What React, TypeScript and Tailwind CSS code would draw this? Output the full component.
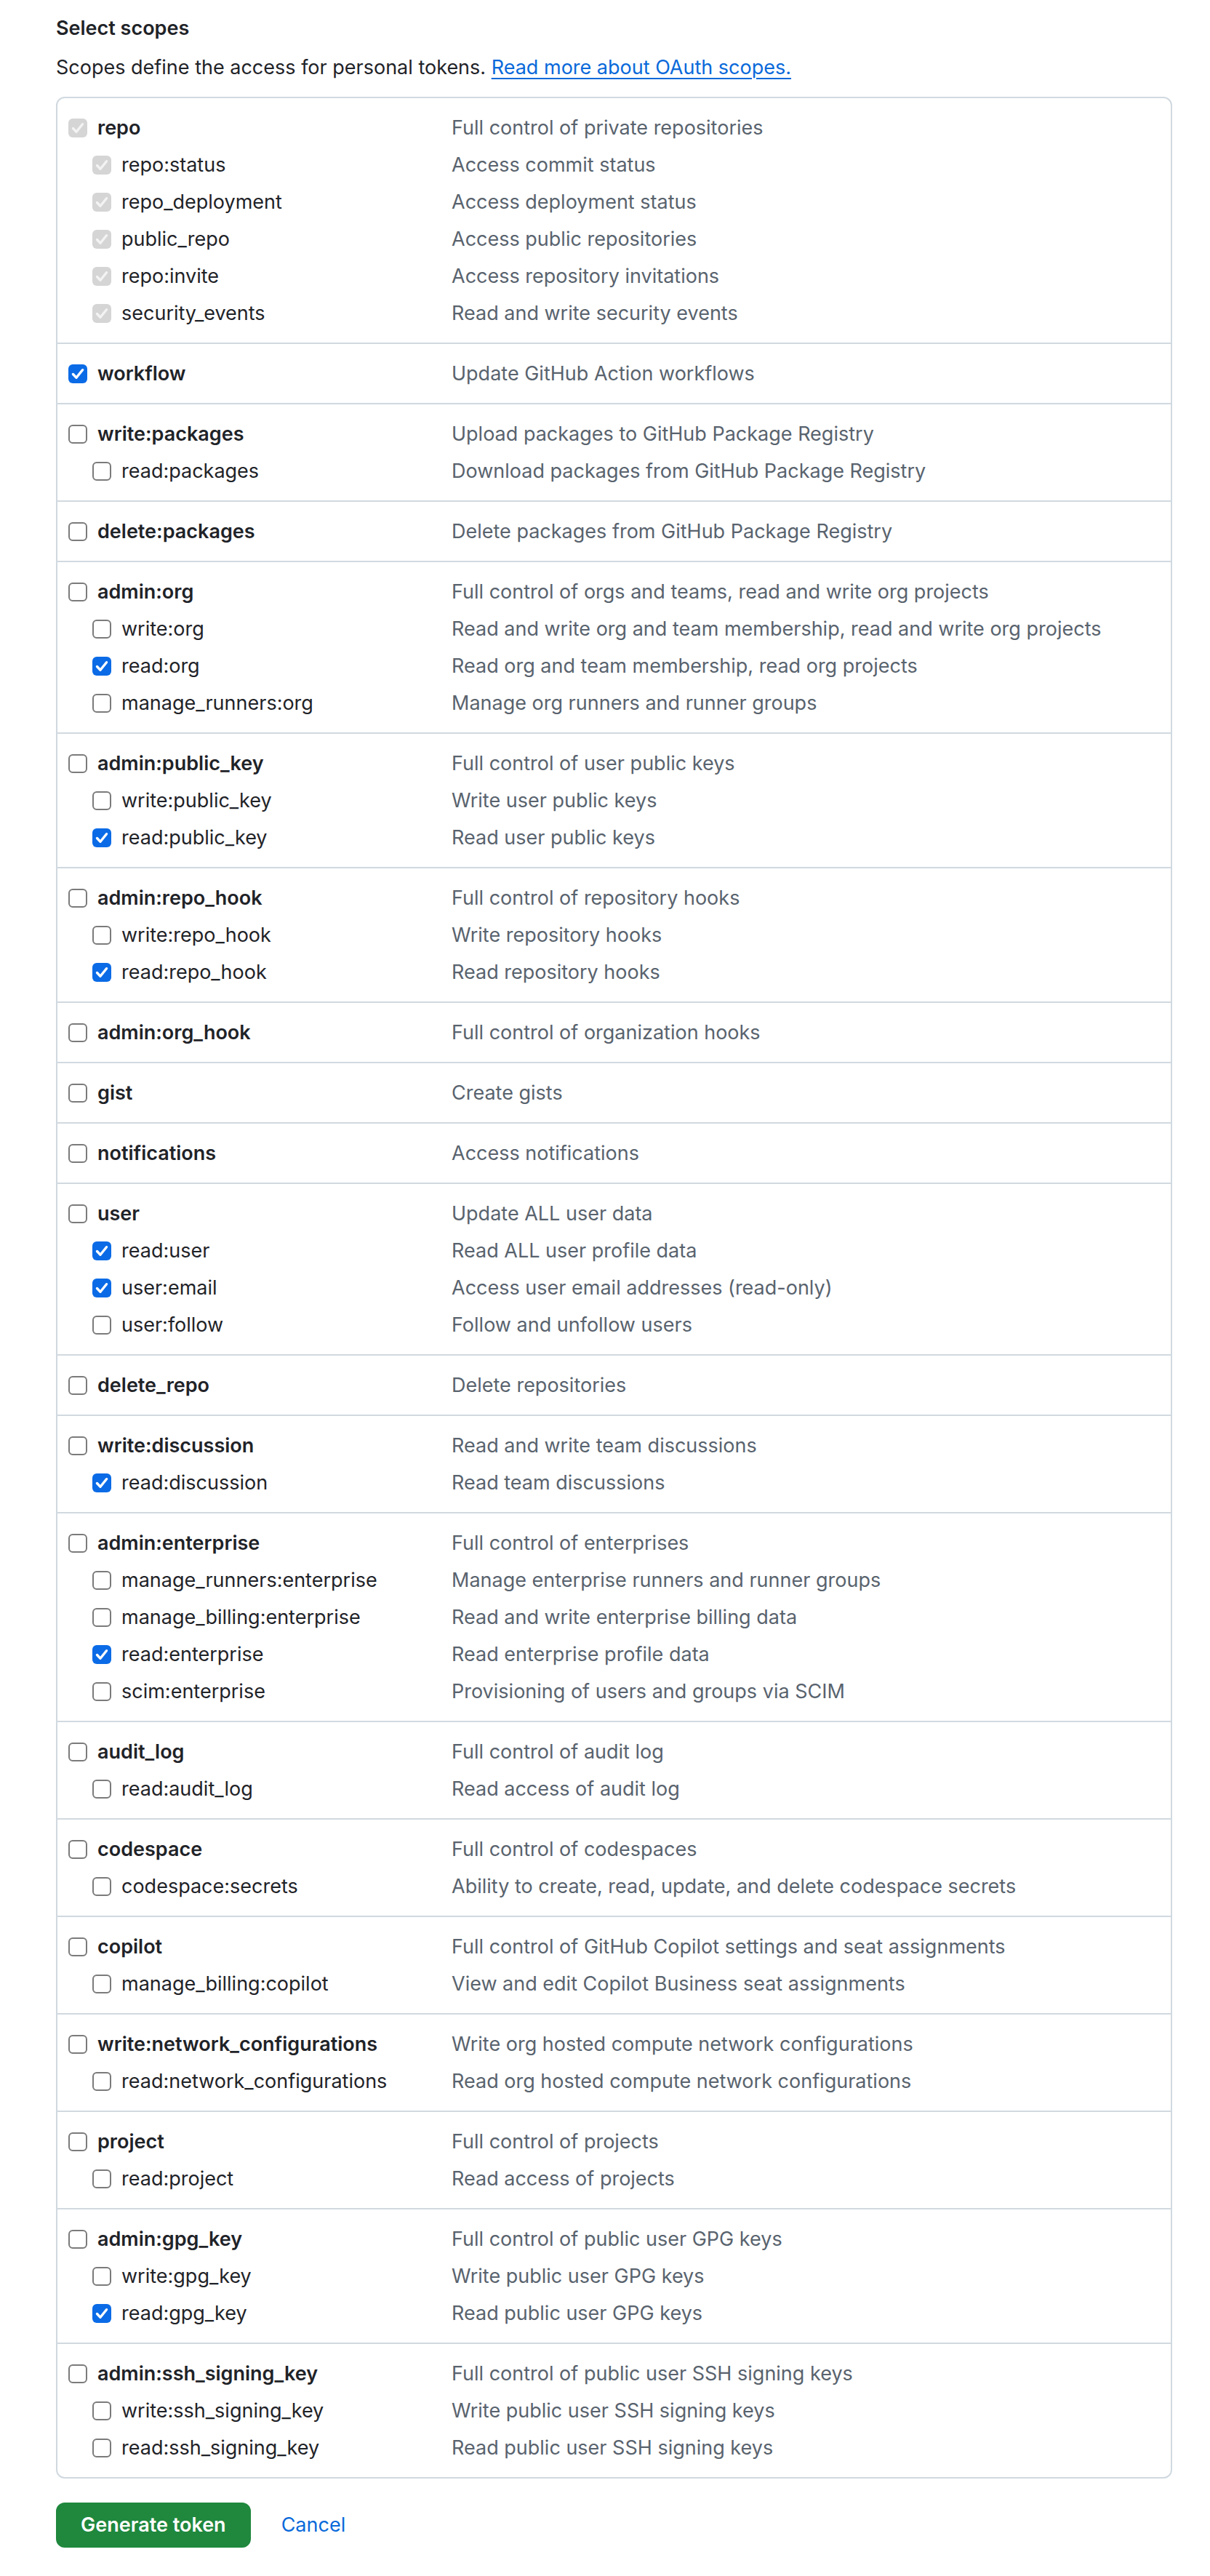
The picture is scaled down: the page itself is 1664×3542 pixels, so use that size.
import React from "react";

type State = "none" | "checked" | "locked";
type Scope = { name: string; desc: string; state?: State };
type Group = { parent: Scope; children?: Scope[] };

// repo children are ticked + greyed because the parent is ticked
const groups: Group[] = [
  {
    parent: { name: "repo", desc: "Full control of private repositories", state: "locked" },
    children: [
      { name: "repo:status", desc: "Access commit status", state: "locked" },
      { name: "repo_deployment", desc: "Access deployment status", state: "locked" },
      { name: "public_repo", desc: "Access public repositories", state: "locked" },
      { name: "repo:invite", desc: "Access repository invitations", state: "locked" },
      { name: "security_events", desc: "Read and write security events", state: "locked" },
    ],
  },
  { parent: { name: "workflow", desc: "Update GitHub Action workflows", state: "checked" } },
  {
    parent: { name: "write:packages", desc: "Upload packages to GitHub Package Registry" },
    children: [{ name: "read:packages", desc: "Download packages from GitHub Package Registry" }],
  },
  { parent: { name: "delete:packages", desc: "Delete packages from GitHub Package Registry" } },
  {
    parent: { name: "admin:org", desc: "Full control of orgs and teams, read and write org projects" },
    children: [
      { name: "write:org", desc: "Read and write org and team membership, read and write org projects" },
      { name: "read:org", desc: "Read org and team membership, read org projects", state: "checked" },
      { name: "manage_runners:org", desc: "Manage org runners and runner groups" },
    ],
  },
  {
    parent: { name: "admin:public_key", desc: "Full control of user public keys" },
    children: [
      { name: "write:public_key", desc: "Write user public keys" },
      { name: "read:public_key", desc: "Read user public keys", state: "checked" },
    ],
  },
  {
    parent: { name: "admin:repo_hook", desc: "Full control of repository hooks" },
    children: [
      { name: "write:repo_hook", desc: "Write repository hooks" },
      { name: "read:repo_hook", desc: "Read repository hooks", state: "checked" },
    ],
  },
  { parent: { name: "admin:org_hook", desc: "Full control of organization hooks" } },
  { parent: { name: "gist", desc: "Create gists" } },
  { parent: { name: "notifications", desc: "Access notifications" } },
  {
    parent: { name: "user", desc: "Update ALL user data" },
    children: [
      { name: "read:user", desc: "Read ALL user profile data", state: "checked" },
      { name: "user:email", desc: "Access user email addresses (read-only)", state: "checked" },
      { name: "user:follow", desc: "Follow and unfollow users" },
    ],
  },
  { parent: { name: "delete_repo", desc: "Delete repositories" } },
  {
    parent: { name: "write:discussion", desc: "Read and write team discussions" },
    children: [{ name: "read:discussion", desc: "Read team discussions", state: "checked" }],
  },
  {
    parent: { name: "admin:enterprise", desc: "Full control of enterprises" },
    children: [
      { name: "manage_runners:enterprise", desc: "Manage enterprise runners and runner groups" },
      { name: "manage_billing:enterprise", desc: "Read and write enterprise billing data" },
      { name: "read:enterprise", desc: "Read enterprise profile data", state: "checked" },
      { name: "scim:enterprise", desc: "Provisioning of users and groups via SCIM" },
    ],
  },
  {
    parent: { name: "audit_log", desc: "Full control of audit log" },
    children: [{ name: "read:audit_log", desc: "Read access of audit log" }],
  },
  {
    parent: { name: "codespace", desc: "Full control of codespaces" },
    children: [{ name: "codespace:secrets", desc: "Ability to create, read, update, and delete codespace secrets" }],
  },
  {
    parent: { name: "copilot", desc: "Full control of GitHub Copilot settings and seat assignments" },
    children: [{ name: "manage_billing:copilot", desc: "View and edit Copilot Business seat assignments" }],
  },
  {
    parent: { name: "write:network_configurations", desc: "Write org hosted compute network configurations" },
    children: [{ name: "read:network_configurations", desc: "Read org hosted compute network configurations" }],
  },
  {
    parent: { name: "project", desc: "Full control of projects" },
    children: [{ name: "read:project", desc: "Read access of projects" }],
  },
  {
    parent: { name: "admin:gpg_key", desc: "Full control of public user GPG keys" },
    children: [
      { name: "write:gpg_key", desc: "Write public user GPG keys" },
      { name: "read:gpg_key", desc: "Read public user GPG keys", state: "checked" },
    ],
  },
  {
    parent: { name: "admin:ssh_signing_key", desc: "Full control of public user SSH signing keys" },
    children: [
      { name: "write:ssh_signing_key", desc: "Write public user SSH signing keys" },
      { name: "read:ssh_signing_key", desc: "Read public user SSH signing keys" },
    ],
  },
];

function Box({ state = "none" }: { state?: State }) {
  if (state === "none") {
    return <span className="h-[26px] w-[26px] shrink-0 rounded-[6px] border-2 border-[#7b7b7b] bg-white" />;
  }
  const locked = state === "locked";
  return (
    <span
      className={`flex h-[26px] w-[26px] shrink-0 items-center justify-center rounded-[6px] ${
        locked ? "bg-[#d5d5d5]" : "bg-[#0b6be6]"
      }`}
    >
      <svg viewBox="0 0 26 26" className="h-[26px] w-[26px]">
        <path
          d="M6.5 13.5l4.5 4.8 8.5-10.6"
          fill="none"
          stroke={locked ? "#f3f3f3" : "#ffffff"}
          strokeWidth="3.4"
          strokeLinecap="round"
          strokeLinejoin="round"
        />
      </svg>
    </span>
  );
}

function Row({ scope, child }: { scope: Scope; child?: boolean }) {
  return (
    <div className="grid h-[51px] grid-cols-[527px_1fr] items-center">
      <label className={`flex items-center gap-[14px] ${child ? "pl-[33px]" : ""}`}>
        <Box state={scope.state} />
        <span className={child ? "text-[#1f2328]" : "font-semibold text-[#1f2328]"}>{scope.name}</span>
      </label>
      <span className="text-[#59636e]">{scope.desc}</span>
    </div>
  );
}

export default function App() {
  return (
    <div className="min-h-[3542px] bg-white pl-[77px] pt-[18px] pb-[38px] text-[27px] leading-[40px] text-[#1f2328] [font-family:Inter,'Liberation_Sans',sans-serif]">
      <div className="h-[42px] font-semibold leading-[42px]">Select scopes</div>
      <p className="mt-[12px] leading-[42px]">
        Scopes define the access for personal tokens.{" "}
        <a href="#" className="text-[#0969da] underline decoration-[2px] underline-offset-[5px]">
          Read more about OAuth scopes.
        </a>
      </p>

      <div className="mt-[19px] w-[1535px] rounded-[12px] border-2 border-[#d1d9e0]">
        {groups.map((g, i) => (
          <div key={g.parent.name} className={`px-[15px] py-[15px] ${i > 0 ? "border-t-2 border-[#d1d9e0]" : ""}`}>
            <Row scope={g.parent} />
            {g.children?.map((c) => (
              <Row key={c.name} scope={c} child />
            ))}
          </div>
        ))}
      </div>

      <div className="mt-[33px] flex items-center gap-[42px]">
        <button className="h-[62px] rounded-[12px] border-2 border-[#1f883d] bg-[#1f883d] px-[32px] font-semibold text-white">
          Generate token
        </button>
        <a href="#" className="text-[#0969da]">
          Cancel
        </a>
      </div>
    </div>
  );
}
